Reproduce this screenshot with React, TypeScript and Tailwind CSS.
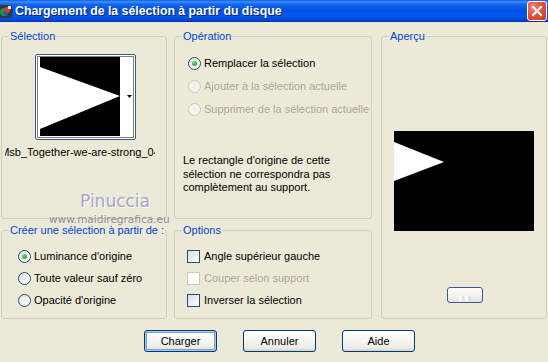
import React from "react";

function Radio({ checked = false, disabled = false }: { checked?: boolean; disabled?: boolean }) {
  return (
    <span
      className={
        "flex items-center justify-center w-[13px] h-[13px] rounded-full border shrink-0 " +
        (disabled
          ? "border-[#CAC8BB] bg-[#F4F3EE]"
          : "border-[#1C5180] bg-[linear-gradient(135deg,#DCDCD4_0%,#F2F2EE_50%,#FFFFFF_100%)]")
      }
    >
      {checked && (
        <span className="w-[5px] h-[5px] rounded-full bg-[radial-gradient(circle_at_35%_35%,#7EE07A_0%,#21A121_70%,#1A8A1A_100%)]" />
      )}
    </span>
  );
}

function Check({ disabled = false }: { disabled?: boolean }) {
  return (
    <span
      className={
        "block w-[13px] h-[13px] border shrink-0 " +
        (disabled
          ? "border-[#CAC8BB] bg-white"
          : "border-[#1C5180] bg-[linear-gradient(135deg,#DCDCD7_0%,#EDEDEA_50%,#FFFFFF_100%)]")
      }
    />
  );
}

function Group({
  label,
  className = "",
  children,
}: {
  label: string;
  className?: string;
  children?: React.ReactNode;
}) {
  return (
    <fieldset className={"relative m-0 p-0 min-w-0 border border-[#D0D0BF] rounded-[3px] " + className}>
      <legend className="ml-[7px] px-[1px] leading-[13px] text-[#0046D5]">{label}</legend>
      {children}
    </fieldset>
  );
}

function Button({ label, def = false }: { label: string; def?: boolean }) {
  return (
    <button
      className={
        "w-[73px] h-[22px] rounded-[3px] border border-[#003C74] text-[11px] text-black flex items-center justify-center bg-[linear-gradient(180deg,#FFFFFF_0%,#F7F7F4_40%,#ECEBE6_85%,#D6D0C5_100%)] " +
        (def ? "shadow-[inset_0_0_0_1px_#A9C4EE,inset_0_0_0_2px_#7DA2CE]" : "")
      }
    >
      {label}
    </button>
  );
}

export default function App() {
  return (
    <div className="w-[548px] h-[362px] overflow-hidden flex flex-col bg-[#ECE9D8] text-[11px] text-black font-['Liberation_Sans',Arial,sans-serif]">
      {/* Title bar */}
      <div className="h-[22px] shrink-0 flex items-center relative bg-[linear-gradient(180deg,#0A5DE6_0%,#3D8CF6_8%,#1565EE_20%,#0054E3_45%,#0055EB_75%,#0049D0_92%,#0031A8_100%)]">
        <svg width="13" height="13" viewBox="0 0 13 13" className="ml-[-1px] shrink-0">
          <rect x="0" y="0" width="13" height="13" rx="2" fill="#2B3A4A" />
          <circle cx="5" cy="7" r="4" fill="#1D9B3A" />
          <circle cx="8" cy="5" r="3" fill="#D8402A" />
          <circle cx="6" cy="8" r="2" fill="#2A56C6" />
          <rect x="9" y="1" width="3" height="3" fill="#E8E8E8" />
        </svg>
        <span className="ml-[3px] text-white font-bold text-[12.3px] [text-shadow:1px_1px_0_#0A246A]">
          Chargement de la sélection à partir du disque
        </span>
        <div className="ml-auto mr-[1px] w-[20px] h-[20px] rounded-[3px] border border-white flex items-center justify-center bg-[radial-gradient(circle_at_30%_30%,#F0876E_0%,#E0553A_45%,#C8381C_100%)]">
          <svg width="12" height="12" viewBox="0 0 12 12">
            <path d="M2 2 L10 10 M10 2 L2 10" stroke="white" strokeWidth="2" strokeLinecap="square" />
          </svg>
        </div>
      </div>

      {/* Main */}
      <div className="flex pl-[1px] pt-[8px]">
        {/* Left column */}
        <div className="flex flex-col w-[166px] gap-[5px]">
          <Group label="Sélection" className="h-[189px]">
            <div className="flex flex-col">
              <div className="ml-[33px] mt-[11px] w-[101px] h-[86px] border border-[#3D5C8A] rounded-[2px] bg-white">
                <svg width="99" height="84" viewBox="0 0 99 84">
                  <rect x="1.5" y="1.5" width="96" height="81" fill="none" stroke="#000" strokeDasharray="1 1" />
                  <rect x="4" y="2" width="80" height="79" fill="#000" />
                  <polygon points="4,12 84,41 4,74" fill="#fff" />
                  <polygon points="91,40 96,40 93.5,43" fill="#000" />
                </svg>
              </div>
              <div className="ml-[3px] mt-[6px] w-[150px] overflow-hidden flex justify-center leading-[13px]">
                <span className="whitespace-nowrap">Msb_Together-we-are-strong_04</span>
              </div>
            </div>
            <div className="absolute left-[78px] top-[149px] text-[17px] leading-[19px] text-[#A5A5C6] font-['DejaVu_Sans',sans-serif] [text-shadow:1px_1px_0_#FFFFFF]">
              Pinuccia
            </div>
            <div className="absolute left-[47px] top-[171px] text-[10.5px] leading-[11px] text-[#8E8E9E] whitespace-nowrap font-['DejaVu_Sans',sans-serif]">
              www.maidiregrafica.eu
            </div>
          </Group>
          <Group label="Créer une sélection à partir de :" className="h-[95px]">
            <div className="flex flex-col pl-[16px] mt-[8px]">
              <div className="h-[22px] flex items-center gap-[3px]">
                <Radio checked />
                <span>Luminance d'origine</span>
              </div>
              <div className="h-[22px] flex items-center gap-[3px]">
                <Radio />
                <span>Toute valeur sauf zéro</span>
              </div>
              <div className="h-[22px] flex items-center gap-[3px]">
                <Radio />
                <span>Opacité d'origine</span>
              </div>
            </div>
          </Group>
        </div>

        {/* Middle column */}
        <div className="flex flex-col w-[198px] ml-[7px] gap-[5px]">
          <Group label="Opération" className="h-[189px]">
            <div className="flex flex-col pl-[13px] mt-[9px]">
              <div className="h-[23px] flex items-center gap-[3px]">
                <Radio checked />
                <span>Remplacer la sélection</span>
              </div>
              <div className="h-[23px] flex items-center gap-[3px] text-[#ACA899]">
                <Radio disabled />
                <span>Ajouter à la sélection actuelle</span>
              </div>
              <div className="h-[23px] flex items-center gap-[3px] text-[#ACA899]">
                <Radio disabled />
                <span>Supprimer de la sélection actuelle</span>
              </div>
            </div>
            <p className="ml-[8px] mt-[33px] leading-[13.5px]">
              Le rectangle d'origine de cette
              <br />
              sélection ne correspondra pas
              <br />
              complètement au support.
            </p>
          </Group>
          <Group label="Options" className="h-[95px]">
            <div className="flex flex-col pl-[12px] mt-[8px]">
              <div className="h-[22px] flex items-center gap-[4px]">
                <Check />
                <span>Angle supérieur gauche</span>
              </div>
              <div className="h-[22px] flex items-center gap-[4px] text-[#ACA899]">
                <Check disabled />
                <span>Couper selon support</span>
              </div>
              <div className="h-[22px] flex items-center gap-[4px]">
                <Check />
                <span>Inverser la sélection</span>
              </div>
            </div>
          </Group>
        </div>

        {/* Right column */}
        <div className="w-[166px] ml-[9px]">
          <Group label="Aperçu" className="h-[289px]">
            <div className="flex flex-col">
              <div className="ml-[12px] mt-[88px] w-[140px] h-[100px] bg-black">
                <svg width="140" height="100" viewBox="0 0 140 100">
                  <polygon points="0,11 50,31 0,50" fill="#fff" />
                </svg>
              </div>
              <div className="ml-[65px] mt-[56px] w-[36px] h-[16px] rounded-[3px] border border-[#3C5A8C] bg-[linear-gradient(180deg,#FFFFFF_0%,#F3F3EF_50%,#E4E3DC_100%)] flex items-end justify-center pb-[1px]">
                <div className="w-[12px] h-[5px] bg-[repeating-linear-gradient(90deg,#FFFFFF_0px,#FFFFFF_3px,#E2E2DE_3px,#E2E2DE_6px)]" />
              </div>
            </div>
          </Group>
        </div>
      </div>

      {/* Buttons */}
      <div className="flex pl-[144px] mt-[11px] gap-[26px]">
        <Button label="Charger" def />
        <Button label="Annuler" />
        <Button label="Aide" />
      </div>
    </div>
  );
}
